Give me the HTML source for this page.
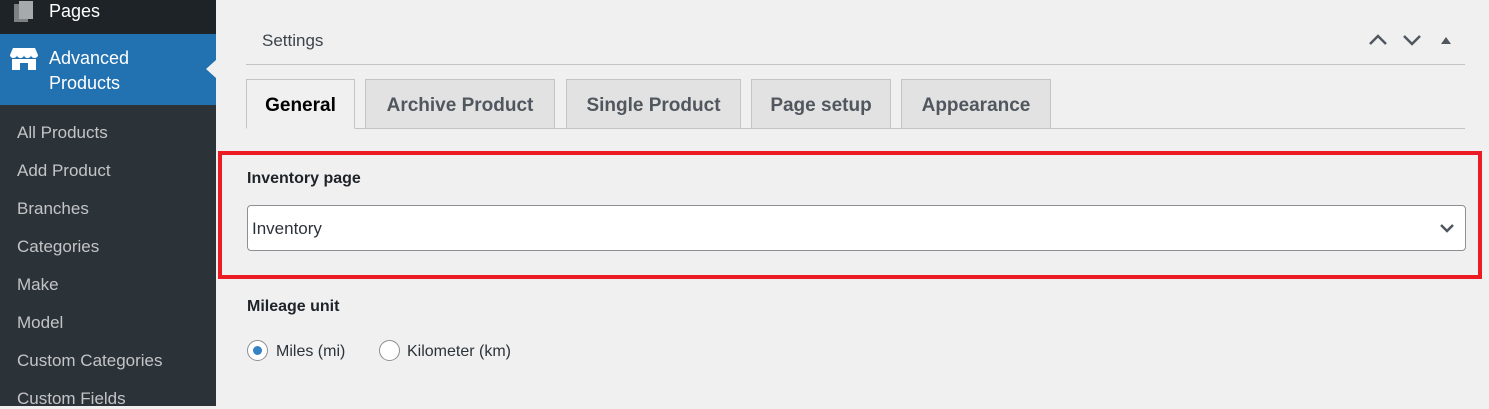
<!DOCTYPE html>
<html><head><meta charset="utf-8"><style>
*{margin:0;padding:0;box-sizing:border-box}
body{width:1489px;height:406px;overflow:hidden;background:#f0f0f1;font-family:"Liberation Sans",sans-serif;position:relative}
.sb{position:absolute;left:0;top:0;width:216px;height:406px;background:#2c3338}
.top{position:absolute;left:0;top:0;width:216px;height:34px;background:#1d2327}
.act{position:absolute;left:0;top:34px;width:216px;height:71px;background:#2271b1}
.arrow{position:absolute;left:206px;top:60px;width:0;height:0;border-top:9px solid transparent;border-bottom:9px solid transparent;border-right:10px solid #f0f0f1}
.t{position:absolute;color:#fff;font-size:18px}
.sub{position:absolute;left:17px;color:#c3c4c7;font-size:17px;line-height:20px}
.hdr{position:absolute;left:262px;top:31px;font-size:17px;color:#3c434a}
.line{position:absolute;left:246px;width:1219px;height:1px;background:#c3c4c7}
.tab{position:absolute;top:79px;height:50px;background:#e2e2e2;border:1px solid #c3c4c7;font-weight:bold;font-size:19px;color:#50575e;text-align:center;line-height:52px}
.tab.a{background:#f0f0f1;color:#000;border-bottom:1px solid #f0f0f1;height:50px}
.red{position:absolute;left:218px;top:151px;width:1264px;height:128px;border:4px solid #ec1c24}
.lbl{position:absolute;left:247px;font-weight:bold;font-size:16px;color:#1d2327}
.sel{position:absolute;left:247px;top:205px;width:1219px;height:46px;background:#fff;border:1px solid #8c8f94;border-radius:4px;font-size:17px;color:#2c3338;padding-left:4px;line-height:46px}
.rad{position:absolute;top:340px;width:21px;height:21px;border:1px solid #8c8f94;border-radius:50%;background:#fff}
.rt{position:absolute;top:341px;font-size:16px;color:#2c3338;line-height:21px}
</style></head><body>
<div class="sb"></div><div class="top"></div><div class="act"></div><div class="arrow"></div>
<svg style="position:absolute;left:14px;top:1px" width="22" height="22" viewBox="0 0 22 22"><rect x="0" y="3" width="14" height="18" fill="#a7aaad" opacity=".7"/><rect x="5" y="0" width="14" height="18" fill="#a7aaad"/></svg>
<div class="t" style="left:49px;top:1px">Pages</div>
<svg style="position:absolute;left:10px;top:48px" width="28" height="22" viewBox="0 0 28 22"><path d="M3 0h22l3 7c0 2-2 3-3.5 3S21 9 21 7c0 2-2 3-3.5 3S14 9 14 7c0 2-2 3-3.5 3S7 9 7 7c0 2-2 3-3.5 3S0 9 0 7z" fill="#fff"/><path d="M2 11h24v11h-8v-7h-8v7H2z" fill="#fff"/></svg>
<div class="t" style="left:49px;top:46px;line-height:25px">Advanced<br>Products</div>
<div class="sub" style="top:123px">All Products</div>
<div class="sub" style="top:161px">Add Product</div>
<div class="sub" style="top:199px">Branches</div>
<div class="sub" style="top:237px">Categories</div>
<div class="sub" style="top:275px">Make</div>
<div class="sub" style="top:313px">Model</div>
<div class="sub" style="top:351px">Custom Categories</div>
<div class="sub" style="top:389px">Custom Fields</div>

<div class="hdr">Settings</div>
<svg style="position:absolute;left:1368px;top:33px" width="90" height="14" viewBox="0 0 90 14"><path d="M2 11l8-8 8 8" stroke="#50575e" stroke-width="2.5" fill="none"/><path d="M36 3l8 8 8-8" stroke="#50575e" stroke-width="2.5" fill="none"/><path d="M73 11l5-7 5 7z" fill="#50575e"/></svg>
<div class="line" style="top:64px"></div>
<div class="line" style="top:128px"></div>
<div class="tab a" style="left:246px;width:109px">General</div>
<div class="tab" style="left:365px;width:190px">Archive Product</div>
<div class="tab" style="left:566px;width:175px">Single Product</div>
<div class="tab" style="left:751px;width:140px">Page setup</div>
<div class="tab" style="left:901px;width:150px">Appearance</div>

<div class="red"></div>
<div class="lbl" style="top:170px">Inventory page</div>
<div class="sel">Inventory</div>
<svg style="position:absolute;left:1439px;top:222px" width="16" height="12" viewBox="0 0 16 12"><path d="M2 3l6 6 6-6" stroke="#50575e" stroke-width="2.5" fill="none"/></svg>
<div class="lbl" style="top:298px">Mileage unit</div>
<div class="rad" style="left:247px"><div style="position:absolute;left:5px;top:5px;width:9px;height:9px;border-radius:50%;background:#3582c4"></div></div>
<div class="rt" style="left:276px">Miles (mi)</div>
<div class="rad" style="left:379px"></div>
<div class="rt" style="left:407px">Kilometer (km)</div>
</body></html>
